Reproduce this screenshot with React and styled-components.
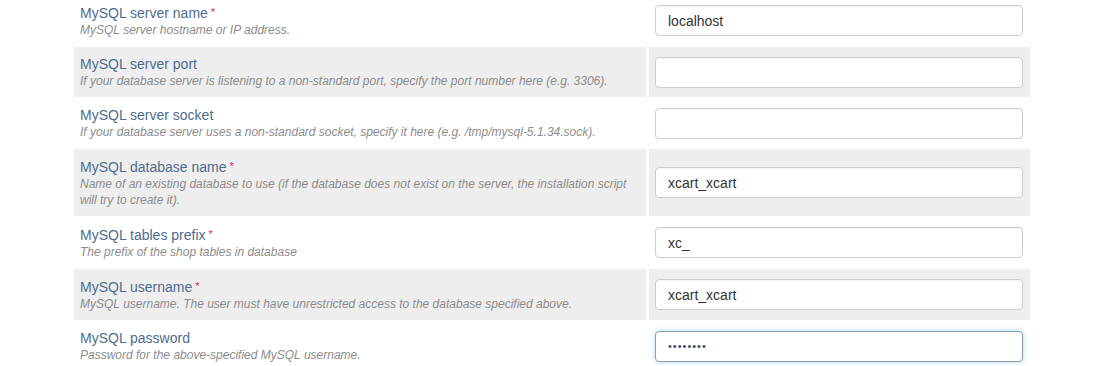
import React from 'react'
import styled, { createGlobalStyle } from 'styled-components'

const Global = createGlobalStyle`
  html, body {
    margin: 0;
    padding: 0;
    background: #fff;
    font-family: "Liberation Sans", Arial, sans-serif;
    overflow: hidden;
  }
`

const Page = styled.div`
  width: 1100px;
  height: 366px;
  overflow: hidden;
`

const Grid = styled.div`
  margin: -5px 0 0 74px;
  width: 956px;
  display: grid;
  grid-template-columns: 572px 381px;
  column-gap: 3px;
  row-gap: 1px;
`

const LabelCell = styled.div`
  background: ${p => (p.$shade ? '#eeeeee' : '#fff')};
  padding: 8px 6px 8px 6px;
`

const InputCell = styled.div`
  background: ${p => (p.$shade ? '#eeeeee' : '#fff')};
  display: flex;
  align-items: center;
  padding: 0 7px 0 6px;
`

const Title = styled.div`
  font-size: 14px;
  line-height: 18px;
  color: #4f6b8d;
`

const Star = styled.span`
  color: #e5175b;
  font-size: 11px;
  margin-left: 3px;
  vertical-align: 2px;
`

const Desc = styled.div`
  font-size: 12px;
  line-height: 16px;
  font-style: italic;
  color: #8c8c8c;
  padding-right: 6px;
`

const Field = styled.input`
  box-sizing: border-box;
  width: 368px;
  height: 31px;
  border: 1px solid #cccccc;
  border-radius: 4px;
  padding: 0 12px;
  font-family: "Liberation Sans", Arial, sans-serif;
  font-size: 14px;
  color: #333;
  background: #fff;
  outline: none;
  box-shadow: inset 0 1px 1px rgba(0, 0, 0, 0.04);
  &:focus {
    border-color: #8f9db0;
    box-shadow: 0 0 5px rgba(102, 175, 233, 0.55);
  }
  &[type='password'] {
    font-size: 11px;
    letter-spacing: 1px;
    color: #3a4a66;
    caret-color: #000;
  }
`

const rows = [
  { title: 'MySQL server name', req: true, desc: 'MySQL server hostname or IP address.', value: 'localhost' },
  { title: 'MySQL server port', desc: 'If your database server is listening to a non-standard port, specify the port number here (e.g. 3306).', value: '' },
  { title: 'MySQL server socket', desc: 'If your database server uses a non-standard socket, specify it here (e.g. /tmp/mysql-5.1.34.sock).', value: '' },
  { title: 'MySQL database name', req: true, desc: 'Name of an existing database to use (if the database does not exist on the server, the installation script will try to create it).', value: 'xcart_xcart' },
  { title: 'MySQL tables prefix', req: true, desc: 'The prefix of the shop tables in database', value: 'xc_' },
  { title: 'MySQL username', req: true, desc: 'MySQL username. The user must have unrestricted access to the database specified above.', value: 'xcart_xcart' },
  { title: 'MySQL password', desc: 'Password for the above-specified MySQL username.', value: 'password', password: true },
]

export default function App() {
  return (
    <Page>
      <Global />
      <Grid>
        {rows.map((r, i) => {
          const shade = i % 2 === 1
          return (
            <React.Fragment key={r.title}>
              <LabelCell $shade={shade}>
                <Title>
                  {r.title}
                  {r.req && <Star>*</Star>}
                </Title>
                <Desc>{r.desc}</Desc>
              </LabelCell>
              <InputCell $shade={shade}>
                <Field
                  type={r.password ? 'password' : 'text'}
                  defaultValue={r.value}
                  autoFocus={r.password}
                />
              </InputCell>
            </React.Fragment>
          )
        })}
      </Grid>
    </Page>
  )
}
